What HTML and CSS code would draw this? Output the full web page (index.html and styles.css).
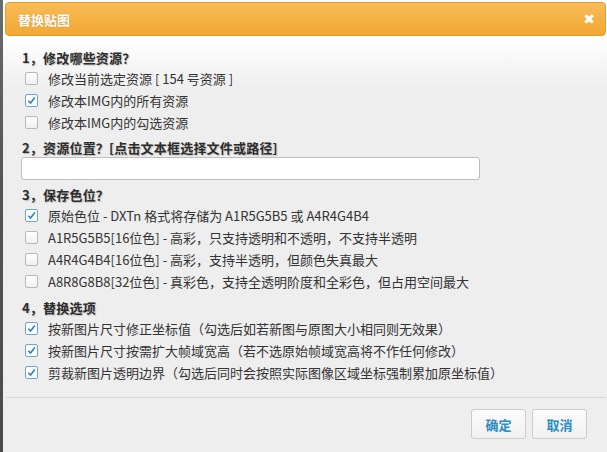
FILE: index.html
```html
<!DOCTYPE html>
<html lang="zh-CN">
<head>
<meta charset="utf-8">
<title>替换贴图</title>
<link rel="stylesheet" href="styles.css">
</head>
<body>
<div class="page">
  <div class="strip"></div>
  <div class="dialog">
    <div class="header">
      <span class="title">替换贴图</span>
      <span class="close">✖</span>
    </div>
    <div class="content">
      <div class="sec">1，修改哪些资源？</div>
      <label class="row"><span class="cb"></span><span>修改当前选定资源 [ 154 号资源 ]</span></label>
      <label class="row"><span class="cb on"><svg viewBox="0 0 12 12"><path d="M2.5 6.3 L5 8.8 L9.6 2.8"/></svg></span><span>修改本IMG内的所有资源</span></label>
      <label class="row"><span class="cb"></span><span>修改本IMG内的勾选资源</span></label>

      <div class="sec gap">2，资源位置？[点击文本框选择文件或路径]</div>
      <div class="input"></div>

      <div class="sec gap">3，保存色位？</div>
      <label class="row"><span class="cb on"><svg viewBox="0 0 12 12"><path d="M2.5 6.3 L5 8.8 L9.6 2.8"/></svg></span><span>原始色位 - DXTn 格式将存储为 A1R5G5B5 或 A4R4G4B4</span></label>
      <label class="row"><span class="cb"></span><span>A1R5G5B5[16位色] - 高彩，只支持透明和不透明，不支持半透明</span></label>
      <label class="row"><span class="cb"></span><span>A4R4G4B4[16位色] - 高彩，支持半透明，但颜色失真最大</span></label>
      <label class="row"><span class="cb"></span><span>A8R8G8B8[32位色] - 真彩色，支持全透明阶度和全彩色，但占用空间最大</span></label>

      <div class="sec gap4">4，替换选项</div>
      <label class="row"><span class="cb on"><svg viewBox="0 0 12 12"><path d="M2.5 6.3 L5 8.8 L9.6 2.8"/></svg></span><span>按新图片尺寸修正坐标值（勾选后如若新图与原图大小相同则无效果）</span></label>
      <label class="row"><span class="cb on"><svg viewBox="0 0 12 12"><path d="M2.5 6.3 L5 8.8 L9.6 2.8"/></svg></span><span>按新图片尺寸按需扩大帧域宽高（若不选原始帧域宽高将不作任何修改）</span></label>
      <label class="row"><span class="cb on"><svg viewBox="0 0 12 12"><path d="M2.5 6.3 L5 8.8 L9.6 2.8"/></svg></span><span>剪裁新图片透明边界（勾选后同时会按照实际图像区域坐标强制累加原坐标值）</span></label>
    </div>
    <div class="footer">
      <button class="btn">确定</button>
      <button class="btn">取消</button>
    </div>
  </div>
</div>
</body>
</html>
```

FILE: styles.css
```css
html, body {
  margin: 0;
  padding: 0;
  background: #eeeeee;
}
body {
  font-family: "Noto Sans CJK SC", "Noto Sans", sans-serif;
  font-size: 13px;
  color: #333;
}
.page {
  display: flex;
  width: 607px;
  height: 452px;
  overflow: hidden;
}
.strip {
  width: 3px;
  flex: none;
  background: linear-gradient(#6a6a6a, #555 40%, #4a4a4a);
}
.dialog {
  flex: 1;
  display: flex;
  flex-direction: column;
  padding: 2px 1px 0 2px;
  background: linear-gradient(#ffffff 36px, #eeeeee 90px);
}
.header {
  height: 32px;
  border: 1px solid #eb9a26;
  border-radius: 4px;
  background: linear-gradient(#f8bc58, #f5b244 50%, #f3a834);
  display: flex;
  align-items: center;
  justify-content: space-between;
  padding: 0 10px 0 12px;
}
.title {
  color: #fff;
  font-weight: bold;
  font-size: 13px;
  text-shadow: 0 0 1px rgba(150, 80, 0, 0.5);
}
.close {
  color: #fff;
  font-size: 14px;
  line-height: 1;
  font-family: "DejaVu Sans", sans-serif;
}
.content {
  padding: 13px 0 14px 16px;
  border-bottom: 1px solid #d8d8d8;
  margin-left: 1px;
}
.sec {
  font-weight: bold;
  line-height: 18px;
  color: #2c2c2c;
  text-shadow: 1px 1px 1px rgba(0, 0, 0, 0.2);
  letter-spacing: 0.2px;
}
.sec.gap {
  margin-top: 6px;
}
.sec.gap4 {
  margin-top: 7px;
}
.row {
  display: flex;
  align-items: center;
  height: 22px;
  gap: 10px;
  padding-left: 3px;
  white-space: nowrap;
}
.cb {
  width: 11px;
  height: 11px;
  flex: none;
  border: 1px solid #b8b8b8;
  border-radius: 2px;
  background: linear-gradient(#ffffff, #f0f0f0);
  display: flex;
  align-items: center;
  justify-content: center;
}
.cb.on {
  border-color: #6aa6d6;
  background: #fff;
}
.cb svg {
  width: 11px;
  height: 11px;
}
.cb svg path {
  fill: none;
  stroke: #2b82c9;
  stroke-width: 1.8;
}
.input {
  width: 457px;
  height: 21px;
  margin-left: -1px;
  border: 1px solid #bdbdbd;
  border-radius: 3px;
  background: #fff;
}
.footer {
  display: flex;
  justify-content: flex-end;
  gap: 6px;
  padding: 11px 19px 0 0;
}
.btn {
  width: 55px;
  height: 30px;
  border: 1px solid #cccccc;
  border-radius: 3px;
  background: linear-gradient(#fbfbfb, #f1f1f1);
  color: #2a8cc4;
  font-family: "Noto Sans CJK SC", sans-serif;
  font-weight: bold;
  font-size: 13px;
  padding: 0;
}
```
